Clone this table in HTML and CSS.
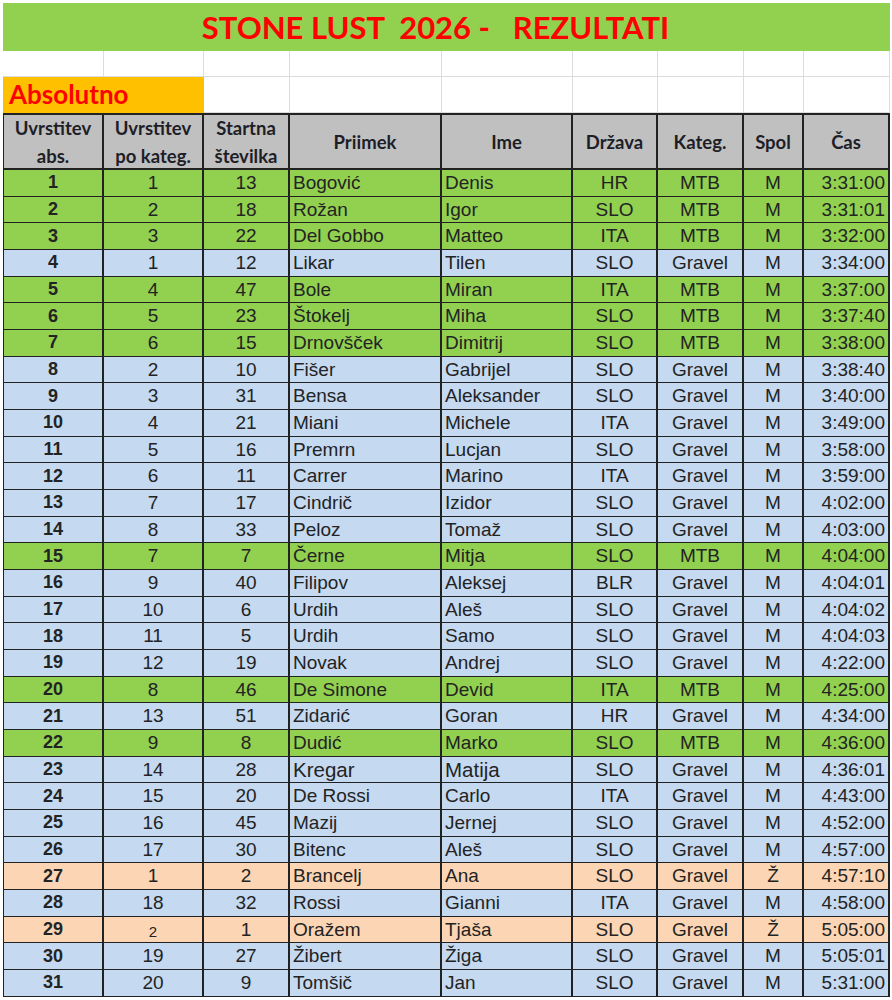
FILE: index.html
```html
<!DOCTYPE html>
<html lang="sl">
<head>
<meta charset="utf-8">
<title>STONE LUST 2026 - REZULTATI</title>
<link rel="stylesheet" href="styles.css">
</head>
<body>
<div class="sheet">
  <div class="title">STONE LUST  2026 -   REZULTATI</div>
  <div class="grid9 blank"><div></div><div></div><div></div><div></div><div></div><div></div><div></div><div></div><div></div></div>
  <div class="grid9 absrow"><div class="abs">Absolutno</div><div></div><div></div><div></div><div></div><div></div><div></div><div></div></div>
  <div class="grid9 results">
    <div class="row head"><span>Uvrstitev<br>abs.</span><span>Uvrstitev<br>po kateg.</span><span>Startna<br>številka</span><span>Priimek</span><span>Ime</span><span>Država</span><span>Kateg.</span><span>Spol</span><span>Čas</span></div>
    <div class="row g"><span>1</span><span>1</span><span>13</span><span>Bogović</span><span>Denis</span><span>HR</span><span>MTB</span><span>M</span><span>3:31:00</span></div>
    <div class="row g"><span>2</span><span>2</span><span>18</span><span>Rožan</span><span>Igor</span><span>SLO</span><span>MTB</span><span>M</span><span>3:31:01</span></div>
    <div class="row g"><span>3</span><span>3</span><span>22</span><span>Del Gobbo</span><span>Matteo</span><span>ITA</span><span>MTB</span><span>M</span><span>3:32:00</span></div>
    <div class="row b"><span>4</span><span>1</span><span>12</span><span>Likar</span><span>Tilen</span><span>SLO</span><span>Gravel</span><span>M</span><span>3:34:00</span></div>
    <div class="row g"><span>5</span><span>4</span><span>47</span><span>Bole</span><span>Miran</span><span>ITA</span><span>MTB</span><span>M</span><span>3:37:00</span></div>
    <div class="row g"><span>6</span><span>5</span><span>23</span><span>Štokelj</span><span>Miha</span><span>SLO</span><span>MTB</span><span>M</span><span>3:37:40</span></div>
    <div class="row g"><span>7</span><span>6</span><span>15</span><span>Drnovšček</span><span>Dimitrij</span><span>SLO</span><span>MTB</span><span>M</span><span>3:38:00</span></div>
    <div class="row b"><span>8</span><span>2</span><span>10</span><span>Fišer</span><span>Gabrijel</span><span>SLO</span><span>Gravel</span><span>M</span><span>3:38:40</span></div>
    <div class="row b"><span>9</span><span>3</span><span>31</span><span>Bensa</span><span>Aleksander</span><span>SLO</span><span>Gravel</span><span>M</span><span>3:40:00</span></div>
    <div class="row b"><span>10</span><span>4</span><span>21</span><span>Miani</span><span>Michele</span><span>ITA</span><span>Gravel</span><span>M</span><span>3:49:00</span></div>
    <div class="row b"><span>11</span><span>5</span><span>16</span><span>Premrn</span><span>Lucjan</span><span>SLO</span><span>Gravel</span><span>M</span><span>3:58:00</span></div>
    <div class="row b"><span>12</span><span>6</span><span>11</span><span>Carrer</span><span>Marino</span><span>ITA</span><span>Gravel</span><span>M</span><span>3:59:00</span></div>
    <div class="row b"><span>13</span><span>7</span><span>17</span><span>Cindrič</span><span>Izidor</span><span>SLO</span><span>Gravel</span><span>M</span><span>4:02:00</span></div>
    <div class="row b"><span>14</span><span>8</span><span>33</span><span>Peloz</span><span>Tomaž</span><span>SLO</span><span>Gravel</span><span>M</span><span>4:03:00</span></div>
    <div class="row g"><span>15</span><span>7</span><span>7</span><span>Černe</span><span>Mitja</span><span>SLO</span><span>MTB</span><span>M</span><span>4:04:00</span></div>
    <div class="row b"><span>16</span><span>9</span><span>40</span><span>Filipov</span><span>Aleksej</span><span>BLR</span><span>Gravel</span><span>M</span><span>4:04:01</span></div>
    <div class="row b"><span>17</span><span>10</span><span>6</span><span>Urdih</span><span>Aleš</span><span>SLO</span><span>Gravel</span><span>M</span><span>4:04:02</span></div>
    <div class="row b"><span>18</span><span>11</span><span>5</span><span>Urdih</span><span>Samo</span><span>SLO</span><span>Gravel</span><span>M</span><span>4:04:03</span></div>
    <div class="row b"><span>19</span><span>12</span><span>19</span><span>Novak</span><span>Andrej</span><span>SLO</span><span>Gravel</span><span>M</span><span>4:22:00</span></div>
    <div class="row g"><span>20</span><span>8</span><span>46</span><span>De Simone</span><span>Devid</span><span>ITA</span><span>MTB</span><span>M</span><span>4:25:00</span></div>
    <div class="row b"><span>21</span><span>13</span><span>51</span><span>Zidarić</span><span>Goran</span><span>HR</span><span>Gravel</span><span>M</span><span>4:34:00</span></div>
    <div class="row g"><span>22</span><span>9</span><span>8</span><span>Dudić</span><span>Marko</span><span>SLO</span><span>MTB</span><span>M</span><span>4:36:00</span></div>
    <div class="row b big"><span>23</span><span>14</span><span>28</span><span>Kregar</span><span>Matija</span><span>SLO</span><span>Gravel</span><span>M</span><span>4:36:01</span></div>
    <div class="row b"><span>24</span><span>15</span><span>20</span><span>De Rossi</span><span>Carlo</span><span>ITA</span><span>Gravel</span><span>M</span><span>4:43:00</span></div>
    <div class="row b"><span>25</span><span>16</span><span>45</span><span>Mazij</span><span>Jernej</span><span>SLO</span><span>Gravel</span><span>M</span><span>4:52:00</span></div>
    <div class="row b"><span>26</span><span>17</span><span>30</span><span>Bitenc</span><span>Aleš</span><span>SLO</span><span>Gravel</span><span>M</span><span>4:57:00</span></div>
    <div class="row p"><span>27</span><span>1</span><span>2</span><span>Brancelj</span><span>Ana</span><span>SLO</span><span>Gravel</span><span>Ž</span><span>4:57:10</span></div>
    <div class="row b"><span>28</span><span>18</span><span>32</span><span>Rossi</span><span>Gianni</span><span>ITA</span><span>Gravel</span><span>M</span><span>4:58:00</span></div>
    <div class="row p"><span>29</span><span class="small">2</span><span>1</span><span>Oražem</span><span>Tjaša</span><span>SLO</span><span>Gravel</span><span>Ž</span><span>5:05:00</span></div>
    <div class="row b"><span>30</span><span>19</span><span>27</span><span>Žibert</span><span>Žiga</span><span>SLO</span><span>Gravel</span><span>M</span><span>5:05:01</span></div>
    <div class="row b"><span>31</span><span>20</span><span>9</span><span>Tomšič</span><span>Jan</span><span>SLO</span><span>Gravel</span><span>M</span><span>5:31:00</span></div>
  </div>
</div>
</body>
</html>
```
FILE: styles.css
```css
html, body {
  margin: 0;
  background: #ffffff;
}
body {
  font-family: "Liberation Sans", Arial, sans-serif;
  color: #222222;
}
.sheet {
  width: 887px;
  padding: 3px 2px 0 3px;
}
.title {
  height: 48px;
  background: #92d050;
  color: #ff0000;
  font-family: Lato, "Open Sans", sans-serif;
  font-weight: 700;
  font-size: 31px;
  white-space: pre;
  display: flex;
  align-items: center;
  justify-content: center;
  padding-right: 22px;
}
.grid9 {
  display: grid;
  grid-template-columns: 101px 100px 86px 152px 131px 85px 86px 60px 86px;
}
.blank {
  height: 26px;
}
.blank > div,
.absrow > div {
  border-right: 1px solid #dcdcdc;
  border-bottom: 1px solid #dcdcdc;
}
.absrow {
  height: 36px;
}
.absrow > .abs {
  grid-column: span 2;
  background: #ffc000;
  border: 0;
  color: #ff0000;
  font-family: Lato, "Open Sans", sans-serif;
  font-weight: 700;
  font-size: 26px;
  display: flex;
  align-items: flex-end;
  padding: 0 0 3px 6px;
}
.results {
  grid-template-columns: 100px 100px 86px 152px 131px 85px 86px 60px 86px;
  grid-template-rows: 55px repeat(31, 26.68px);
  border-left: 1px solid #222222;
  border-top: 2px solid #222222;
}
.row {
  display: contents;
}
.row.g { --bg: #92d050; }
.row.b { --bg: #c5d9f1; }
.row.p { --bg: #fcd5b4; }
.row > span {
  background: var(--bg);
  border-right: 2px solid #222222;
  border-bottom: 1px solid #222222;
  display: flex;
  align-items: center;
  justify-content: center;
  padding: 0 3px;
  font-size: 19px;
  white-space: nowrap;
  overflow: hidden;
  color: #232323;
}
.row > span:nth-child(1) {
  font-weight: 700;
  font-size: 18px;
}
.row > span:nth-child(4),
.row > span:nth-child(5) {
  justify-content: flex-start;
}
.row > span:nth-child(9) {
  justify-content: flex-end;
}
.row.big > span:nth-child(4),
.row.big > span:nth-child(5) {
  font-size: 20.5px;
}
.row > span.small {
  font-size: 15px;
  padding-top: 3px;
}
.row.head > span {
  background: #c0c0c0;
  border-bottom: 2px solid #222222;
  font-family: Lato, "Open Sans", sans-serif;
  font-weight: 700;
  font-size: 18.5px;
  line-height: 28px;
  text-align: center;
  justify-content: center;
  color: #1e1e28;
}
```
